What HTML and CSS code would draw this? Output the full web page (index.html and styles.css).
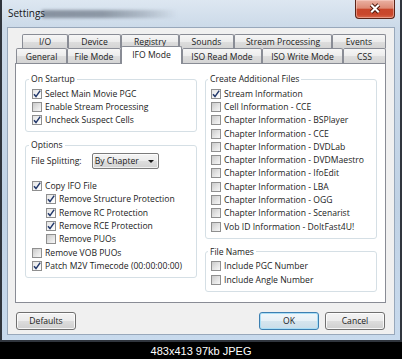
FILE: index.html
```html
<!DOCTYPE html>
<html>
<head>
<meta charset="utf-8">
<title>Settings</title>
<link rel="stylesheet" href="styles.css">
</head>
<body>
<div class="screen">
  <div class="window">
    <div class="titlebar">
      <span class="title">Settings</span>
      <span class="title-blur"></span>
      <div class="close">
        <svg class="close-x" viewBox="0 0 40 19"><path class="x-out" d="M16 5 L24 13 M24 5 L16 13"/><path class="x-in" d="M16 5 L24 13 M24 5 L16 13"/></svg>
      </div>
    </div>
    <div class="client">
      <div class="tabs">
        <div class="tab-row back">
          <div class="tab t-io">I/O</div>
          <div class="tab t-device">Device</div>
          <div class="tab t-registry">Registry</div>
          <div class="tab t-sounds">Sounds</div>
          <div class="tab t-stream">Stream Processing</div>
          <div class="tab t-events">Events</div>
        </div>
        <div class="tab-row front">
          <div class="tab t-general">General</div>
          <div class="tab t-filemode">File Mode</div>
          <div class="tab t-ifo selected">IFO Mode</div>
          <div class="tab t-isoread">ISO Read Mode</div>
          <div class="tab t-isowrite">ISO Write Mode</div>
          <div class="tab t-css">CSS</div>
        </div>
      </div>
      <div class="panel">
        <div class="col">
          <fieldset class="group">
            <legend>On Startup</legend>
            <div class="cb"><span class="box on"><svg class="tick" viewBox="0 0 8 8"><path d="M1 4.2 L3 6.6 L7.2 0.6"/></svg></span>Select Main Movie PGC</div>
            <div class="cb"><span class="box"></span>Enable Stream Processing</div>
            <div class="cb"><span class="box on"><svg class="tick" viewBox="0 0 8 8"><path d="M1 4.2 L3 6.6 L7.2 0.6"/></svg></span>Uncheck Suspect Cells</div>
          </fieldset>
          <fieldset class="group">
            <legend>Options</legend>
            <div class="combo-row">
              <span class="combo-label">File Splitting:</span>
              <div class="combo"><span>By Chapter</span><span class="arrow"></span></div>
            </div>
            <div class="cb first-after-combo"><span class="box on"><svg class="tick" viewBox="0 0 8 8"><path d="M1 4.2 L3 6.6 L7.2 0.6"/></svg></span>Copy IFO File</div>
            <div class="cb indent"><span class="box on"><svg class="tick" viewBox="0 0 8 8"><path d="M1 4.2 L3 6.6 L7.2 0.6"/></svg></span>Remove Structure Protection</div>
            <div class="cb indent"><span class="box on"><svg class="tick" viewBox="0 0 8 8"><path d="M1 4.2 L3 6.6 L7.2 0.6"/></svg></span>Remove RC Protection</div>
            <div class="cb indent"><span class="box on"><svg class="tick" viewBox="0 0 8 8"><path d="M1 4.2 L3 6.6 L7.2 0.6"/></svg></span>Remove RCE Protection</div>
            <div class="cb indent"><span class="box"></span>Remove PUOs</div>
            <div class="cb"><span class="box"></span>Remove VOB PUOs</div>
            <div class="cb"><span class="box on"><svg class="tick" viewBox="0 0 8 8"><path d="M1 4.2 L3 6.6 L7.2 0.6"/></svg></span>Patch M2V Timecode (00:00:00:00)</div>
          </fieldset>
        </div>
        <div class="col">
          <fieldset class="group right">
            <legend>Create Additional Files</legend>
            <div class="cb"><span class="box on"><svg class="tick" viewBox="0 0 8 8"><path d="M1 4.2 L3 6.6 L7.2 0.6"/></svg></span>Stream Information</div>
            <div class="cb"><span class="box"></span>Cell Information - CCE</div>
            <div class="cb"><span class="box"></span>Chapter Information - BSPlayer</div>
            <div class="cb"><span class="box"></span>Chapter Information - CCE</div>
            <div class="cb"><span class="box"></span>Chapter Information - DVDLab</div>
            <div class="cb"><span class="box"></span>Chapter Information - DVDMaestro</div>
            <div class="cb"><span class="box"></span>Chapter Information - IfoEdit</div>
            <div class="cb"><span class="box"></span>Chapter Information - LBA</div>
            <div class="cb"><span class="box"></span>Chapter Information - OGG</div>
            <div class="cb"><span class="box"></span>Chapter Information - Scenarist</div>
            <div class="cb"><span class="box"></span>Vob ID Information - DoItFast4U!</div>
          </fieldset>
          <fieldset class="group right">
            <legend>File Names</legend>
            <div class="cb"><span class="box"></span>Include PGC Number</div>
            <div class="cb"><span class="box"></span>Include Angle Number</div>
          </fieldset>
        </div>
      </div>
      <div class="actions">
        <button class="btn">Defaults</button>
        <div class="spacer"></div>
        <button class="btn btn-ok">OK</button>
        <button class="btn">Cancel</button>
      </div>
    </div>
  </div>
  <div class="caption">483x413 97kb JPEG</div>
</div>
</body>
</html>
```

FILE: styles.css
```css
* { box-sizing: border-box; }
html, body { margin: 0; padding: 0; }
body {
  width: 402px;
  height: 359px;
  overflow: hidden;
  background: #000;
  font-family: "Open Sans", "Noto Sans", sans-serif;
  font-size: 8.6px;
  color: #1b1b1b;
}
.screen {
  display: flex;
  flex-direction: column;
  width: 402px;
  height: 359px;
}
.window {
  flex: none;
  height: 342px;
  border: 2px solid #30353d;
  border-top: none;
  background: linear-gradient(to bottom, #dde7f1 0px, #ccdae9 27px, #c0d2e5 60%, #c8daed 100%);
  display: flex;
  flex-direction: column;
}
.titlebar {
  flex: none;
  height: 27px;
  display: flex;
  align-items: flex-start;
  padding: 0 5px 0 6px;
}
.title {
  font-size: 10px;
  line-height: 14px;
  margin-top: 6px;
  color: #161616;
}
.title-blur {
  width: 135px;
  height: 8px;
  margin: 10px 0 0 -3px;
  background: linear-gradient(to right, rgba(70,80,95,0.55), rgba(70,80,95,0.5) 45%, rgba(90,100,115,0.3) 75%, rgba(90,100,115,0));
  filter: blur(1.6px);
}
.close {
  margin-left: auto;
  width: 40px;
  height: 19px;
  border: 1px solid #5a2418;
  border-top: none;
  border-radius: 0 0 4px 4px;
  background: linear-gradient(to bottom, #eab1a3 0%, #dd8a75 45%, #c8462b 52%, #c9472c 80%, #d8684b 100%);
  box-shadow: inset 0 0 0 1px rgba(255,220,210,0.45);
}
.close-x { display: block; width: 38px; height: 18px; }
.x-out { stroke: #4a1408; stroke-width: 4.2; fill: none; }
.x-in { stroke: #ffffff; stroke-width: 2.2; fill: none; }

.client {
  flex: none;
  height: 308px;
  margin: 0 5px;
  border: 1px solid #98a8bb;
  background: #f0f0f0;
  padding: 6px 8px 0 7px;
  display: flex;
  flex-direction: column;
}
.tabs { display: flex; flex-direction: column; }
.tab-row { display: flex; }
.tab-row.back { height: 14px; margin-left: 7px; }
.tab-row.front { height: 15px; margin-left: 1px; align-items: flex-end; }
.tab {
  height: 100%;
  border: 1px solid #898c95;
  border-bottom: none;
  border-radius: 2px 2px 0 0;
  background: linear-gradient(to bottom, #f6f6f6 0%, #ececec 50%, #dedede 51%, #d4d4d4 100%);
  display: flex;
  align-items: center;
  justify-content: center;
  padding-top: 2px;
  line-height: 1;
  white-space: nowrap;
}
.t-io { width: 46px; }
.t-device { width: 53px; }
.t-registry { width: 58px; }
.t-sounds { width: 55px; }
.t-stream { width: 98px; }
.t-events { width: 54px; }
.t-general { width: 51px; }
.t-filemode { width: 54px; }
.t-ifo { width: 61px; }
.t-isoread { width: 80px; }
.t-isowrite { width: 81px; }
.t-css { width: 43px; }
.tab.selected {
  position: relative;
  z-index: 1;
  height: 18px;
  margin-bottom: -1px;
  background: #fff;
  padding-top: 0;
  padding-bottom: 1px;
}

.panel {
  flex: none;
  height: 240px;
  border: 1px solid #898c95;
  background: #fff;
  display: grid;
  grid-template-columns: 172px 172px;
  column-gap: 8px;
  align-content: start;
  padding: 9px 0 0 9px;
}
.col { display: flex; flex-direction: column; gap: 7px; }
.group {
  margin: 0;
  min-width: 0;
  border: 1px solid #d5dfe5;
  border-radius: 3px;
  padding: 2px 4px 4.5px 6px;
}
.group.right { padding-left: 5px; }
.group legend {
  padding: 0 2px;
  margin-left: -3px;
  line-height: 12px;
  color: #1b1b1b;
}
.cb {
  display: flex;
  align-items: center;
  height: 13.3px;
  white-space: nowrap;
}
.cb.indent { padding-left: 14px; }
.cb.first-after-combo { margin-top: 10px; }
.box {
  flex: none;
  width: 10px;
  height: 10px;
  margin-right: 3px;
  border: 1px solid #8f8f8f;
  background: linear-gradient(135deg, #c9c9c9 0%, #e4e4e4 55%, #f7f7f7 100%);
  display: flex;
}
.box.on { background: linear-gradient(135deg, #e4e4e4 0%, #f6f6f6 60%, #ffffff 100%); }
.tick { width: 8px; height: 8px; overflow: visible; }
.tick path { fill: none; stroke: #22386b; stroke-width: 1.5; }

.combo-row {
  display: flex;
  align-items: center;
  height: 16px;
}
.combo-label { margin-left: -1px; }
.combo {
  margin-left: 10px;
  width: 67px;
  height: 16px;
  border: 1px solid #7a7a7a;
  border-radius: 2px;
  background: linear-gradient(to bottom, #f4f4f4 0%, #ececec 50%, #dedede 51%, #d2d2d2 100%);
  box-shadow: inset 0 0 0 1px rgba(255,255,255,0.7);
  display: flex;
  align-items: center;
  justify-content: space-between;
  padding: 0 4px 0 2px;
}
.arrow {
  width: 0;
  height: 0;
  border-left: 3px solid transparent;
  border-right: 3px solid transparent;
  border-top: 3.5px solid #1a1a1a;
}

.actions {
  display: flex;
  gap: 6px;
  margin-top: 9px;
  padding: 0 1px;
}
.spacer { flex: 1; }
.btn {
  width: 60px;
  height: 18px;
  margin: 0;
  padding: 0;
  border: 1px solid #707070;
  border-radius: 3px;
  background: linear-gradient(to bottom, #f3f3f3 0%, #ececec 49%, #dddddd 50%, #cfcfcf 100%);
  box-shadow: inset 0 0 0 1px rgba(255,255,255,0.8);
  font-family: "Open Sans", "Noto Sans", sans-serif;
  font-size: 8.6px;
  color: #1b1b1b;
  display: flex;
  align-items: center;
  justify-content: center;
}
.btn-ok {
  border-color: #3c7fb1;
  background: linear-gradient(to bottom, #f0f7fb 0%, #e6f0f6 49%, #d6e5ee 50%, #cadde9 100%);
  box-shadow: inset 0 0 0 1px #a9def6;
}

.caption {
  flex: 1;
  display: flex;
  align-items: center;
  justify-content: center;
  color: #fff;
  font-family: "Liberation Sans", Arial, sans-serif;
  font-size: 11px;
  padding-top: 1px;
}
```
